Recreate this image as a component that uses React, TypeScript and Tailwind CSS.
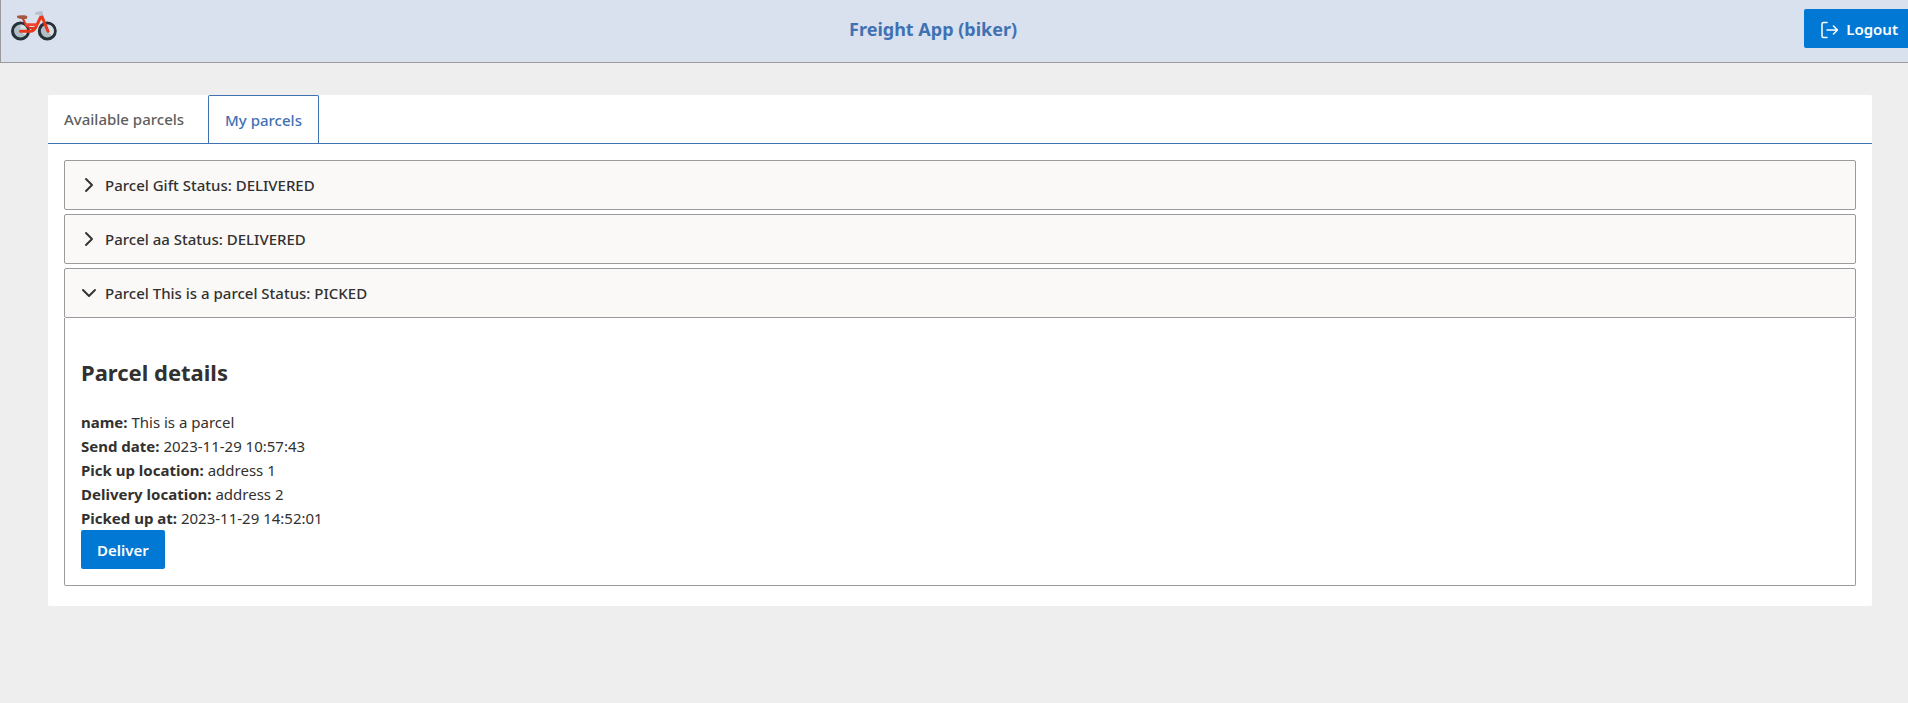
import React, { useState } from "react";

const focusRing = "focus-visible:outline-2 focus-visible:outline-[#605e5c]";

function BikeLogo() {
  return (
    <svg width="48" height="32" viewBox="0 0 48 32" role="img" aria-label="Bicycle">
      <g fill="#b0bec5" stroke="#263238" strokeWidth="3">
        <circle cx="10.5" cy="22" r="8" />
        <circle cx="37.3" cy="22" r="8" />
      </g>
      <path d="M10.500 15.500a6.500 6.500 0 0 1 4.500 11.200L10.500 22z M37.300 15.500a6.500 6.500 0 0 1 4.500 11.200L37.300 22z" fill="#d5dee6" />
      <path d="M12.700 9.300l3.600 7.500 3.500 2.200h7" stroke="#d8371c" strokeWidth="2" fill="none" />
      <path
        d="M10.500 22.300h10c2.500 0 3.400-.8 4.800-3.200L31.500 6.500 38 22.300"
        stroke="#e8371b"
        strokeWidth="3"
        strokeLinecap="round"
        strokeLinejoin="round"
        fill="none"
      />
      <path d="M16.300 15.600h10" stroke="#f44336" strokeWidth="2.800" strokeLinecap="round" fill="none" />
      <path d="M7 6.800c2.500-.7 6.500-.7 9.500-.1 1 .3 1.100 2 .4 2.700-.8.800-3.900.8-5.900.6C9.800 9.700 8 9 7 8.400z" fill="#a1583f" />
      <path d="M26 3.300l5-1.200c1.300-.2 1.800.4 1.800 1.300v3l-2.500.6-1.800-1.500-2.500.2c-1.300 0-1.300-2 0-2.400z" fill="#b5c2cd" />
    </svg>
  );
}

function LogoutIcon() {
  return (
    <svg width="18" height="18" viewBox="0 0 18 18" fill="none" stroke="currentColor" strokeWidth="1.500" strokeLinecap="round" strokeLinejoin="round" aria-hidden="true">
      <path d="M7 1.500H3.500A1.500 1.500 0 0 0 2 3v12A1.500 1.500 0 0 0 3.500 16.500h3.500" />
      <path d="M7 9h10.500M13.500 5l4 4-4 4" />
    </svg>
  );
}

function Chevron({ open }: { open: boolean }) {
  return (
    <svg width="16" height="16" viewBox="0 0 16 16" fill="none" stroke="currentColor" strokeWidth="1.900" strokeLinecap="round" strokeLinejoin="round" aria-hidden="true">
      <path d={open ? "M2 5l6 6 6-6" : "M5 2l6 6-6 6"} />
    </svg>
  );
}

const details = [
  { label: "name:", value: "This is a parcel" },
  { label: "Send date:", value: "2023-11-29 10:57:43" },
  { label: "Pick up location:", value: "address 1" },
  { label: "Delivery location:", value: "address 2" },
  { label: "Picked up at:", value: "2023-11-29 14:52:01" },
];

const parcels = [
  { name: "Gift", status: "DELIVERED" },
  { name: "aa", status: "DELIVERED" },
  { name: "This is a parcel", status: "PICKED" },
];

function ParcelDetails() {
  return (
    <div className="rounded-b-xs border-x border-b border-[#9b9b9e] bg-white p-4">
      <h2 className="mt-[18px] mb-[18px] text-[22px] leading-10 font-bold">Parcel details</h2>
      {details.map((d) => (
        <div key={d.label} className="font-normal">
          <b className="font-bold">{d.label}</b> {d.value}
        </div>
      ))}
      <button type="button" className={`block rounded-xs bg-[#0078d4] px-4 pt-[9px] pb-[7px] leading-[23px] font-semibold text-white ${focusRing}`}>
        Deliver
      </button>
    </div>
  );
}

export default function App() {
  const [open, setOpen] = useState(2);

  return (
    <div className="min-h-screen bg-[#eeeeee] font-['Noto_Sans','Open_Sans',sans-serif] text-[15px] leading-6 text-[#323130]">
      <header className="flex items-start justify-between border-b border-l border-[#9b9b9e] bg-[#dae1ee] pt-[9px] pb-[13px]">
        <div className="pr-1 pl-[9px]">
          <BikeLogo />
        </div>
        <h1 className="text-[18px] leading-10 font-bold text-[#4071b3]">Freight App (biker)</h1>
        <button type="button" className={`flex items-center gap-2 rounded-l-xs bg-[#0078d4] pt-[9px] pr-[10px] pb-[7px] pl-4 leading-[23px] font-semibold text-white ${focusRing}`}>
          <LogoutIcon />
          Logout
        </button>
      </header>

      <main className="pt-8 pr-9 pb-12 pl-12">
        <div className="rounded-xs bg-white">
          <div role="tablist" className="flex items-start border-b border-[#4071b3]">
            <button type="button" role="tab" aria-selected="false" className={`pt-[13px] pr-6 pb-[11px] pl-4 leading-[23px] font-medium text-[#605e5c] ${focusRing}`}>
              Available parcels
            </button>
            <button type="button" role="tab" aria-selected="true" className={`rounded-t-xs border border-b-0 border-[#4071b3] px-4 pt-[13px] pb-[11px] leading-[23px] font-medium text-[#4071b3] ${focusRing}`}>
              My parcels
            </button>
          </div>

          <div className="flex flex-col gap-1 px-4 pt-4 pb-5">
            {parcels.map((p, i) => (
              <section key={p.name}>
                <button
                  type="button"
                  aria-expanded={open === i}
                  onClick={() => setOpen(open === i ? -1 : i)}
                  className={`flex w-full items-center gap-2 rounded-xs border border-[#9b9b9e] bg-[#faf9f8] px-4 py-3 text-left font-medium ${focusRing}`}
                >
                  <Chevron open={open === i} />
                  Parcel {p.name} Status: {p.status}
                </button>
                {open === i && <ParcelDetails />}
              </section>
            ))}
          </div>
        </div>
      </main>
    </div>
  );
}
